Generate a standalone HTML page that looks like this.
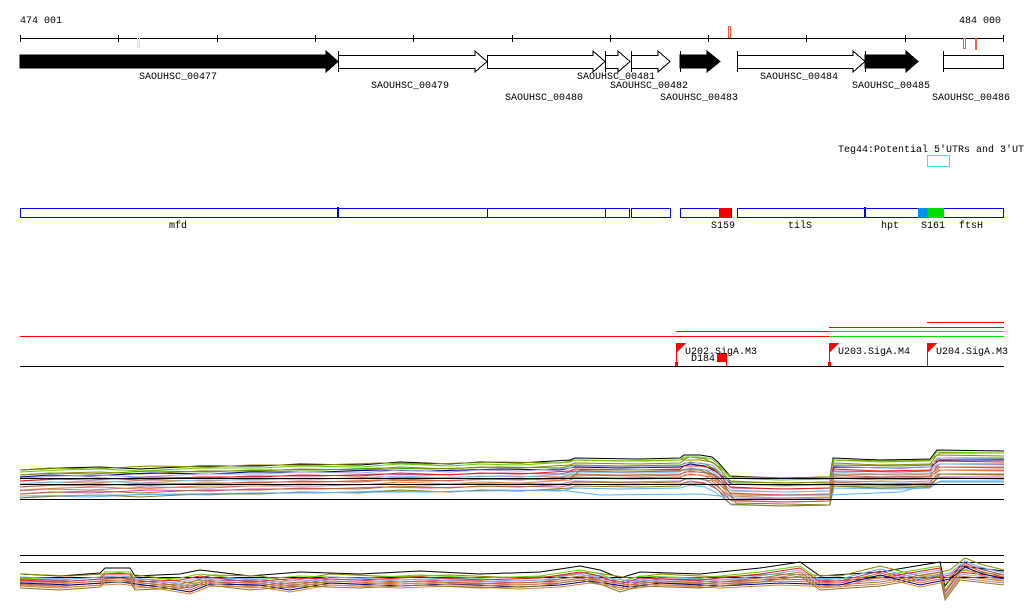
<!DOCTYPE html>
<html><head><meta charset="utf-8"><style>
html,body{margin:0;padding:0;background:#fff;width:1024px;height:611px;overflow:hidden}
svg{position:absolute;left:0;top:0}
text{font-family:"Liberation Mono",monospace;font-size:10px;fill:#000}
</style></head><body>
<svg width="1024" height="611" viewBox="0 0 1024 611" xmlns="http://www.w3.org/2000/svg" shape-rendering="crispEdges">
<defs>
<path id="pa" fill="none" d="M20,470 L60,468 L100,467 L140,469 L200,466 L260,466 L300,464 L360,465 L400,462 L450,464 L480,462 L520,463 L570,460 L575,458 L640,459 L680,458 L684,455 L700,455 L712,457 L718,462 L730,476 L780,478 L830,477 L833,458 L880,460 L930,459 L937,450 L1004,451"/>
<path id="pb" fill="none" d="M20,472 L50,470 L90,471 L150,468 L210,469 L250,467 L320,467 L380,465 L430,466 L500,464 L560,465 L575,462 L620,463 L680,462 L690,459 L705,461 L715,466 L732,479 L790,480 L830,479 L834,462 L900,463 L930,462 L940,455 L1004,455"/>
<path id="pc" fill="none" d="M20,578 L60,580 L100,577 L105,572 L130,572 L135,580 L180,578 L200,574 L250,580 L300,576 L360,578 L420,575 L480,578 L540,576 L580,570 L600,574 L620,582 L640,576 L700,578 L760,572 L800,566 L820,580 L880,576 L940,566 L945,590 L960,570 L1004,575"/>
<path id="pd" fill="none" d="M20,576 L70,578 L120,575 L160,580 L190,585 L210,577 L260,578 L290,583 L330,576 L400,579 L450,577 L520,580 L560,578 L590,574 L630,580 L660,576 L720,579 L780,576 L840,578 L880,568 L920,578 L950,572 L965,560 L980,566 L1004,572"/>
</defs>
<text x="20" y="23">474 001</text>
<text x="959" y="23">484 000</text>
<g stroke="#000" stroke-width="1">
<line x1="20" y1="38.5" x2="1004" y2="38.5"/>
<line x1="20.5" y1="35" x2="20.5" y2="42"/><line x1="118.5" y1="35" x2="118.5" y2="42"/><line x1="217.5" y1="35" x2="217.5" y2="42"/><line x1="315.5" y1="35" x2="315.5" y2="42"/><line x1="413.5" y1="35" x2="413.5" y2="42"/><line x1="512.5" y1="35" x2="512.5" y2="42"/><line x1="610.5" y1="35" x2="610.5" y2="42"/><line x1="708.5" y1="35" x2="708.5" y2="42"/><line x1="806.5" y1="35" x2="806.5" y2="42"/><line x1="905.5" y1="35" x2="905.5" y2="42"/><line x1="1003.5" y1="35" x2="1003.5" y2="42"/>
</g>
<rect x="137.5" y="37.5" width="2" height="10" fill="none" stroke="#f0d0c8"/>
<rect x="728.5" y="26.5" width="2" height="11" fill="none" stroke="#f06040"/>
<rect x="963.5" y="38.5" width="2" height="10" fill="none" stroke="#f06040"/>
<rect x="975" y="38" width="2" height="12" fill="#f06040"/>
<g stroke="#000" stroke-width="1">
<polygon points="20,55 326,55 326,51 338,61.5 326,72 326,68 20,68" fill="#000"/>
<polygon points="338.5,55.5 475,55.5 475,51 487,61.5 475,72 475,68.5 338.5,68.5" fill="#fff"/>
<line x1="338.5" y1="51" x2="338.5" y2="72"/>
<polygon points="487.5,55.5 593,55.5 593,51 605,61.5 593,72 593,68.5 487.5,68.5" fill="#fff"/>
<polygon points="605.5,55.5 618,55.5 618,51 630,61.5 618,72 618,68.5 605.5,68.5" fill="#fff"/>
<line x1="605.5" y1="51" x2="605.5" y2="72"/>
<polygon points="631.5,55.5 658,55.5 658,51 670,61.5 658,72 658,68.5 631.5,68.5" fill="#fff"/>
<line x1="631.5" y1="51" x2="631.5" y2="72"/>
<polygon points="680,55 707,55 707,51 720,61.5 707,72 707,68 680,68" fill="#000"/>
<line x1="680.5" y1="51" x2="680.5" y2="72"/>
<polygon points="737.5,55.5 853,55.5 853,51 865,61.5 853,72 853,68.5 737.5,68.5" fill="#fff"/>
<line x1="737.5" y1="51" x2="737.5" y2="72"/>
<polygon points="865,55 906,55 906,51 918,61.5 906,72 906,68 865,68" fill="#000"/>
<line x1="865.5" y1="51" x2="865.5" y2="72"/>
<rect x="943.5" y="55.5" width="60" height="13" fill="#fff"/>
<line x1="943.5" y1="51" x2="943.5" y2="72"/>
</g>
<text x="139" y="79">SAOUHSC_00477</text>
<text x="371" y="88">SAOUHSC_00479</text>
<text x="505" y="100">SAOUHSC_00480</text>
<text x="577" y="79">SAOUHSC_00481</text>
<text x="610" y="88">SAOUHSC_00482</text>
<text x="660" y="100">SAOUHSC_00483</text>
<text x="760" y="79">SAOUHSC_00484</text>
<text x="852" y="88">SAOUHSC_00485</text>
<text x="932" y="100">SAOUHSC_00486</text>
<text x="838" y="152">Teg44:Potential 5′UTRs and 3′UTRs</text>
<rect x="927.5" y="155.5" width="22" height="11" fill="none" stroke="#40e0f0"/>
<g stroke="#0000e0" fill="#fff">
<rect x="20.5" y="208.5" width="318" height="9"/>
<rect x="338.5" y="208.5" width="149" height="9"/>
<rect x="487.5" y="208.5" width="118" height="9"/>
<rect x="605.5" y="208.5" width="24" height="9"/>
<rect x="631.5" y="208.5" width="39" height="9"/>
<rect x="680.5" y="208.5" width="51" height="9"/>
<rect x="737.5" y="208.5" width="128" height="9"/>
<rect x="865.5" y="208.5" width="78" height="9"/>
<rect x="943.5" y="208.5" width="60" height="9"/>
</g>
<g fill="#0000e0"><rect x="337" y="207" width="2" height="11"/><rect x="864" y="207" width="2" height="11"/></g>
<rect x="719" y="208" width="12" height="10" fill="#f00000"/>
<rect x="918" y="208" width="10" height="10" fill="#0090f0"/>
<rect x="928" y="208" width="16" height="10" fill="#00e000"/>
<text x="169" y="228">mfd</text>
<text x="711" y="228">S159</text>
<text x="788" y="228">tilS</text>
<text x="881" y="228">hpt</text>
<text x="921" y="228">S161</text>
<text x="959" y="228">ftsH</text>
<rect x="927" y="322" width="77" height="1" fill="#f00"/>
<rect x="829" y="327" width="175" height="1" fill="#f00"/>
<rect x="676" y="331" width="153" height="1" fill="#f00"/>
<rect x="829" y="331" width="175" height="1" fill="#00e000"/>
<rect x="20" y="336" width="809" height="1" fill="#f00"/>
<rect x="829" y="336" width="175" height="1" fill="#00e000"/>
<rect x="20" y="366" width="984" height="1" fill="#000"/>
<g fill="#f00">
<rect x="676" y="343" width="1" height="23"/><polygon points="676,343 686,343 676,353"/><rect x="675" y="362" width="3" height="4"/>
<rect x="829" y="343" width="1" height="23"/><polygon points="829,343 839,343 829,353"/><rect x="828" y="362" width="3" height="4"/>
<rect x="927" y="343" width="1" height="23"/><polygon points="927,343 937,343 927,353"/>
<rect x="726" y="355" width="1" height="11"/>
<rect x="717" y="353" width="10" height="9"/>
</g>
<text x="685" y="354">U202.SigA.M3</text>
<text x="691" y="361">D184</text>
<text x="838" y="354">U203.SigA.M4</text>
<text x="936" y="354">U204.SigA.M3</text>
<g shape-rendering="auto" stroke-width="1">
<use href="#pa" stroke="#000"/>
<use href="#pb" stroke="#8a8a00" transform="translate(0,-2)"/>
<use href="#pa" stroke="#60d000" transform="translate(0,2)"/>
<use href="#pb" stroke="#40a000" transform="translate(0,3)"/>
<use href="#pa" stroke="#8a8a00" transform="translate(0,5)"/>
<use href="#pb" stroke="#000080" transform="translate(0,5)"/>
<use href="#pa" stroke="#a0a0e0" transform="translate(0,8)"/>
<use href="#pb" stroke="#c04080" transform="translate(0,9)"/>
<use href="#pa" stroke="#e02020" transform="translate(0,11)"/>
<use href="#pb" stroke="#c08060" transform="translate(0,12)"/>
<use href="#pa" stroke="#80c0f0" transform="translate(0,14)"/>
<use href="#pb" stroke="#e06030" transform="translate(0,15)"/>
<use href="#pa" stroke="#c06060" transform="translate(0,17)"/>
<use href="#pb" stroke="#a080c0" transform="translate(0,19)"/>
<use href="#pa" stroke="#e08040" transform="translate(0,20)"/>
<use href="#pb" stroke="#d050a0" transform="translate(0,22)"/>
<use href="#pa" stroke="#b07030" transform="translate(0,24)"/>
<use href="#pb" stroke="#60b0f0" transform="translate(0,26)"/>
<use href="#pa" stroke="#8a7a20" transform="translate(0,28)"/>
<polyline fill="none" stroke="#60b0f0" points="20,496 120,495 250,493 400,492 560,490 600,495 700,494 720,496 830,495 900,492 940,482 1004,482"/>
<polyline fill="none" stroke="#8a7a20" points="570,480 580,470 700,470 720,478 736,503 830,505 832,486 930,486 940,474 1004,474"/>
</g>
<g fill="#000"><rect x="20" y="478" width="984" height="1"/><rect x="20" y="484" width="984" height="1"/><rect x="20" y="499" width="984" height="1"/>
<rect x="20" y="555" width="984" height="1"/><rect x="20" y="562" width="984" height="1"/><rect x="20" y="577" width="984" height="1"/></g>
<g shape-rendering="auto">
<use href="#pc" stroke="#000" transform="translate(0,-4)"/>
<use href="#pd" stroke="#8a8a00" transform="translate(0,-2)"/>
<use href="#pc" stroke="#60d000"/>
<use href="#pd" stroke="#60b0f0" transform="translate(0,1)"/>
<use href="#pc" stroke="#e02020" transform="translate(0,2)"/>
<use href="#pd" stroke="#c04080" transform="translate(0,3)"/>
<use href="#pc" stroke="#a0a0e0" transform="translate(0,4)"/>
<use href="#pd" stroke="#e06030" transform="translate(0,5)"/>
<use href="#pc" stroke="#b07030" transform="translate(0,6)"/>
<use href="#pd" stroke="#000080" transform="translate(0,7)"/>
<use href="#pc" stroke="#c08060" transform="translate(0,8)"/>
<use href="#pd" stroke="#e08040" transform="translate(0,9)"/>
<use href="#pc" stroke="#8a7a20" transform="translate(0,10)"/>
</g>
</svg>
</body></html>
